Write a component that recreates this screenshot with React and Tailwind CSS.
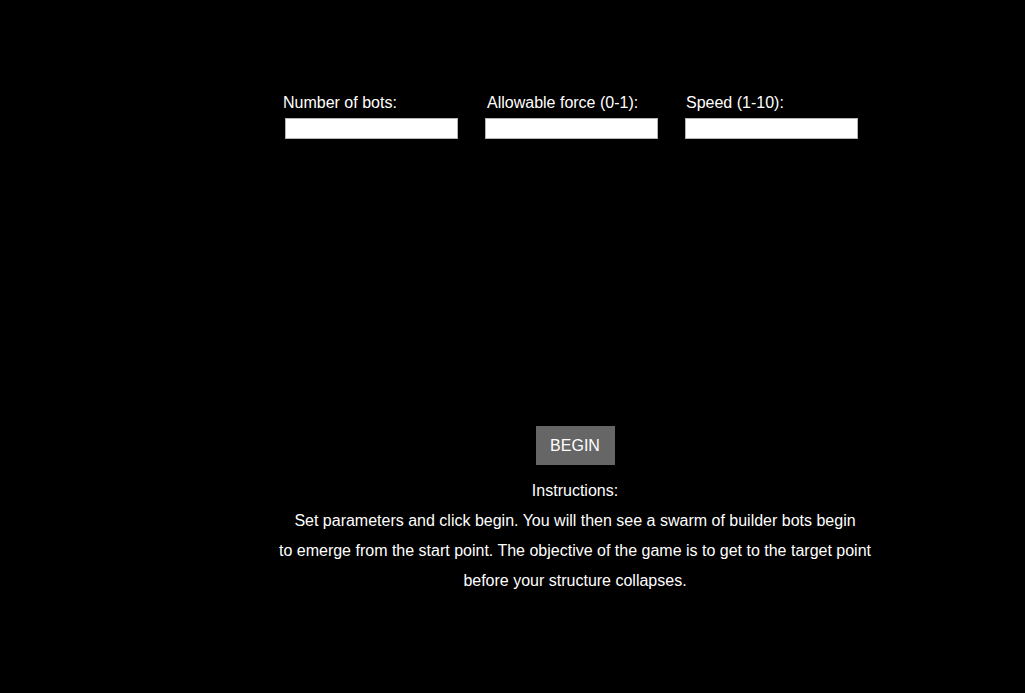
const fields = [
    { label: "Number of bots:", shift: "-ml-[2px]" },
    { label: "Allowable force (0-1):", shift: "ml-[2px]" },
    { label: "Speed (1-10):", shift: "ml-[1px]" },
];

export default function App() {
    return (
        <div className="min-h-[693px] w-full bg-black text-white font-['Liberation_Sans',Arial,sans-serif]">
            <div className="ml-[275px] w-[600px] pt-[92px]">
                <div className="flex pl-[10px]">
                    {fields.map((f) => (
                        <div key={f.label} className="w-[200px] shrink-0 flex flex-col">
                            <label className={`text-[16px] leading-[22px] h-[22px] ${f.shift}`}>{f.label}</label>
                            <input
                                type="text"
                                className="mt-[4px] w-[173px] h-[21px] bg-white border border-[#b5b5b5] outline-none text-black text-[13px] px-1"
                            />
                        </div>
                    ))}
                </div>

                <div className="h-[287px]" />

                <div className="flex flex-col items-center">
                    <button className="w-[79px] h-[39px] bg-[#666666] text-white text-[16px]">
                        BEGIN
                    </button>
                    <div className="mt-[11px] text-[16px] leading-[30px] text-center">
                        <p>Instructions:</p>
                        <p>
                            Set parameters and click begin. You will then see a swarm of builder bots begin
                            <br />
                            to emerge from the start point. The objective of the game is to get to the target point
                            <br />
                            before your structure collapses.
                        </p>
                    </div>
                </div>
            </div>
        </div>
    );
}
